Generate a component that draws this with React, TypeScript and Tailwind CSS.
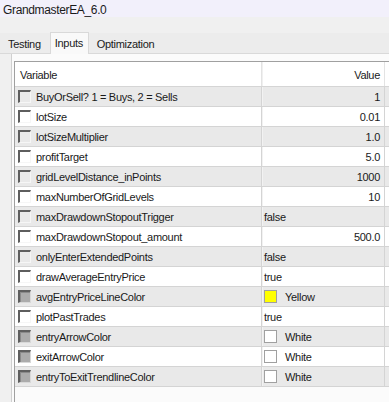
import React from "react";

type Row = {
  name: string;
  value: string;
  kind: "right" | "left" | "color";
  swatch?: string;
  cb: "off" | "gray";
};

const rows: Row[] = [
  { name: "BuyOrSell? 1 = Buys, 2 = Sells", value: "1", kind: "right", cb: "off" },
  { name: "lotSize", value: "0.01", kind: "right", cb: "off" },
  { name: "lotSizeMultiplier", value: "1.0", kind: "right", cb: "off" },
  { name: "profitTarget", value: "5.0", kind: "right", cb: "off" },
  { name: "gridLevelDistance_inPoints", value: "1000", kind: "right", cb: "off" },
  { name: "maxNumberOfGridLevels", value: "10", kind: "right", cb: "off" },
  { name: "maxDrawdownStopoutTrigger", value: "false", kind: "left", cb: "off" },
  { name: "maxDrawdownStopout_amount", value: "500.0", kind: "right", cb: "off" },
  { name: "onlyEnterExtendedPoints", value: "false", kind: "left", cb: "off" },
  { name: "drawAverageEntryPrice", value: "true", kind: "left", cb: "off" },
  { name: "avgEntryPriceLineColor", value: "Yellow", kind: "color", swatch: "#ffff00", cb: "gray" },
  { name: "plotPastTrades", value: "true", kind: "left", cb: "off" },
  { name: "entryArrowColor", value: "White", kind: "color", swatch: "#ffffff", cb: "gray" },
  { name: "exitArrowColor", value: "White", kind: "color", swatch: "#ffffff", cb: "gray" },
  { name: "entryToExitTrendlineColor", value: "White", kind: "color", swatch: "#ffffff", cb: "gray" },
];

function CheckBox({ state }: { state: "off" | "gray" }) {
  if (state === "gray") {
    return (
      <div className="w-[13px] h-[13px] shrink-0 border-t-2 border-l-2 border-t-[#5e5e5e] border-l-[#5e5e5e] border-b border-r border-b-[#d8d8d8] border-r-[#d8d8d8] bg-[#9a9a9a]">
        <div className="w-full h-full border-t border-l border-t-[#8a8a8a] border-l-[#8a8a8a] bg-[#ababab]" />
      </div>
    );
  }
  return (
    <div className="w-[13px] h-[13px] shrink-0 border-t-2 border-l-2 border-t-[#5e5e5e] border-l-[#5e5e5e] border-b border-r border-b-[#f6f6f6] border-r-[#f6f6f6]" />
  );
}

export default function App() {
  const font = { fontFamily: '"Liberation Sans", Arial, sans-serif' };
  return (
    <div
      className="w-[389px] h-[402px] overflow-hidden bg-[#f0f0f0] text-[11px] tracking-[-0.3px] text-black flex flex-col"
      style={font}
    >
      {/* title */}
      <div className="h-[17px] bg-[#f2f0fb] pl-[3px] text-[12px] tracking-[-0.35px] leading-[20px] text-[#1a1a1a] shrink-0">
        GrandmasterEA_6.0
      </div>
      <div className="h-[16px] bg-[#f0f0f0] shrink-0" />
      {/* tabs */}
      <div className="h-[21px] flex items-end bg-[#ececec] border-b border-[#d9d9d9] shrink-0 relative">
        <div className="h-[19px] pl-[8px] pr-[9px] leading-[21px] text-[#1a1a1a]">Testing</div>
        <div className="h-[22px] w-[39px] -mb-px bg-[#f9f9f9] border border-b-0 border-[#d9d9d9] pl-[4px] leading-[21px] text-[#1a1a1a]">
          Inputs
        </div>
        <div className="h-[19px] pl-[8px] leading-[21px] text-[#1a1a1a]">Optimization</div>
      </div>
      {/* page */}
      <div className="flex-1 flex bg-[#f0f0f0]">
        <div className="w-[11px] shrink-0 bg-[#f0f0f0]" />
        <div className="flex-1 flex flex-col border-l border-[#d0d0d0] bg-[#fbfbfb] pt-[7px] pl-[2px]">
          <div className="flex-1 flex flex-col border-l border-t border-[#a0a0a0] bg-white">
            {/* header */}
            <div className="h-[25px] flex border-b border-[#d5d5d5] bg-white shrink-0">
              <div className="w-[247px] pl-[5px] leading-[26px] border-r border-[#e3e3e3] text-[#1a1a1a]">Variable</div>
              <div className="w-[123px] pr-[4px] leading-[26px] text-right border-l border-[#f0f0f0] border-r border-r-[#e3e3e3] text-[#1a1a1a]">
                Value
              </div>
              <div className="flex-1" />
            </div>
            {rows.map((r, i) => {
              const bg = i % 2 === 0 ? "bg-[#e9e9e9]" : "bg-white";
              return (
                <div key={r.name} className={`h-[20px] flex border-b border-[#d4d4d4] shrink-0 ${bg}`}>
                  <div className="w-[247px] flex items-center pl-[3px] border-r border-[#d4d4d4]">
                    <CheckBox state={r.cb} />
                    <span className="ml-[5px] pt-[1px] text-[#1a1a1a] whitespace-nowrap">{r.name}</span>
                  </div>
                  <div className="w-[123px] flex items-center border-l border-[#f2f2f2] border-r border-r-[#d4d4d4]">
                    {r.kind === "right" && (
                      <span className="flex-1 text-right pr-[4px] pt-[1px] text-[#1a1a1a]">{r.value}</span>
                    )}
                    {r.kind === "left" && <span className="pl-[1px] pt-[1px] text-[#1a1a1a]">{r.value}</span>}
                    {r.kind === "color" && (
                      <>
                        <div
                          className="w-[13px] h-[13px] ml-[1px] border border-[#a0a0a0]"
                          style={{ backgroundColor: r.swatch }}
                        />
                        <span className="ml-[8px] pt-[1px] text-[#1a1a1a]">{r.value}</span>
                      </>
                    )}
                  </div>
                  <div className="flex-1" />
                </div>
              );
            })}
            <div className="flex-1 bg-[#fbfbfb]" />
          </div>
        </div>
      </div>
    </div>
  );
}
